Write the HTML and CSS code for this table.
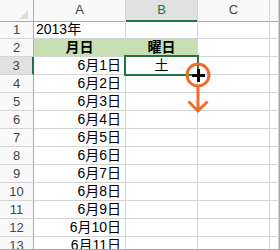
FILE: index.html
```html
<!DOCTYPE html>
<html lang="ja">

<head>
    <meta charset="UTF-8">
    <meta name="viewport" content="width=device-width, initial-scale=1.0">
    <title>曜日</title>
    <link rel="stylesheet" href="styles.css">
</head>

<body>
    <div class="sheet">
        <div class="row head">
            <div class="corner"><span class="tri"></span></div>
            <div class="col">A</div>
            <div class="col active">B</div>
            <div class="col">C</div>
            <div class="col"></div>
        </div>
        <div class="row">
            <div class="num">1</div>
            <div class="cell">2013年</div>
            <div class="cell"></div>
            <div class="cell"></div>
            <div class="cell"></div>
        </div>
        <div class="row">
            <div class="num">2</div>
            <div class="cell title">月日</div>
            <div class="cell title">曜日</div>
            <div class="cell"></div>
            <div class="cell"></div>
        </div>
        <div class="row">
            <div class="num active">3</div>
            <div class="cell date">6月1日</div>
            <div class="cell center selected">土</div>
            <div class="cell"></div>
            <div class="cell"></div>
        </div>
        <div id="rest"></div>

        <!-- fill handle cursor and drag hint -->
        <svg class="hint" width="280" height="250" viewBox="0 0 280 250">
            <circle cx="198" cy="75" r="11" fill="none" stroke="#f26b2b" stroke-width="3" />
            <path d="M198 86 V111 M188.5 101.5 L198 111 L207.5 101.5" fill="none" stroke="#f26b2b" stroke-width="3" />
            <rect x="192" y="74" width="13" height="3" fill="#000" />
            <rect x="197" y="69" width="3" height="13" fill="#000" />
        </svg>
    </div>

    <script>
        // rows 4-13: 6月2日 .. 6月11日
        const rest = document.getElementById('rest');
        for (let r = 4; r <= 13; r++) {
            const row = document.createElement('div');
            row.className = 'row';
            row.innerHTML = `
                <div class="num">${r}</div>
                <div class="cell date">6月${r - 2}日</div>
                <div class="cell"></div>
                <div class="cell"></div>
                <div class="cell"></div>
            `;
            rest.appendChild(row);
        }
    </script>
</body>

</html>
```

FILE: styles.css
```css
body {
    margin: 0;
    padding: 0;
    background-color: #ffffff;
}

.sheet {
    position: relative;
    width: 279px;
    height: 249px;
    overflow: hidden;
    border-right: 1px solid #a6a6a6;
    border-bottom: 1px solid #a6a6a6;
    font-family: "Liberation Sans", "Noto Sans CJK JP", sans-serif;
    font-size: 14px;
    color: #000;
}

.row {
    display: grid;
    grid-template-columns: 34px 92px 72px 72px 9px;
    height: 18px;
}

.row > div {
    box-sizing: border-box;
    border-right: 1px solid #d4d4d4;
    border-bottom: 1px solid #d4d4d4;
    line-height: 17px;
    white-space: nowrap;
}

/* column header */
.head {
    height: 21px;
}

.head > div {
    background-color: #f9f9f9;
    border-bottom-color: #ababab;
    font-size: 13px;
    color: #444;
    text-align: center;
    line-height: 20px;
}

.head .corner {
    position: relative;
    border-right-color: #ababab;
}

.tri {
    position: absolute;
    right: 5px;
    bottom: 2px;
    width: 0;
    height: 0;
    border-left: 9px solid transparent;
    border-bottom: 9px solid #dcdcdc;
}

.head .active {
    background-color: #e1e1e1;
    color: #217346;
    border-bottom: 2px solid #217346;
}

/* row numbers */
.row .num {
    background-color: #f9f9f9;
    border-right-color: #ababab;
    font-size: 13px;
    color: #444;
    text-align: center;
}

.row .num.active {
    background-color: #e1e1e1;
    border-right: 2px solid #217346;
}

.cell {
    padding: 0 2px;
}

.title {
    background-color: #c6e0b4;
    font-weight: bold;
    text-align: center;
}

.date {
    text-align: right;
    padding-right: 4px;
}

.center {
    text-align: center;
}

.selected {
    position: relative;
}

.selected::after {
    content: "";
    position: absolute;
    left: -2px;
    top: -2px;
    right: -2px;
    bottom: -2px;
    border: 2px solid #217346;
}

.hint {
    position: absolute;
    top: 0;
    left: 0;
}
```
